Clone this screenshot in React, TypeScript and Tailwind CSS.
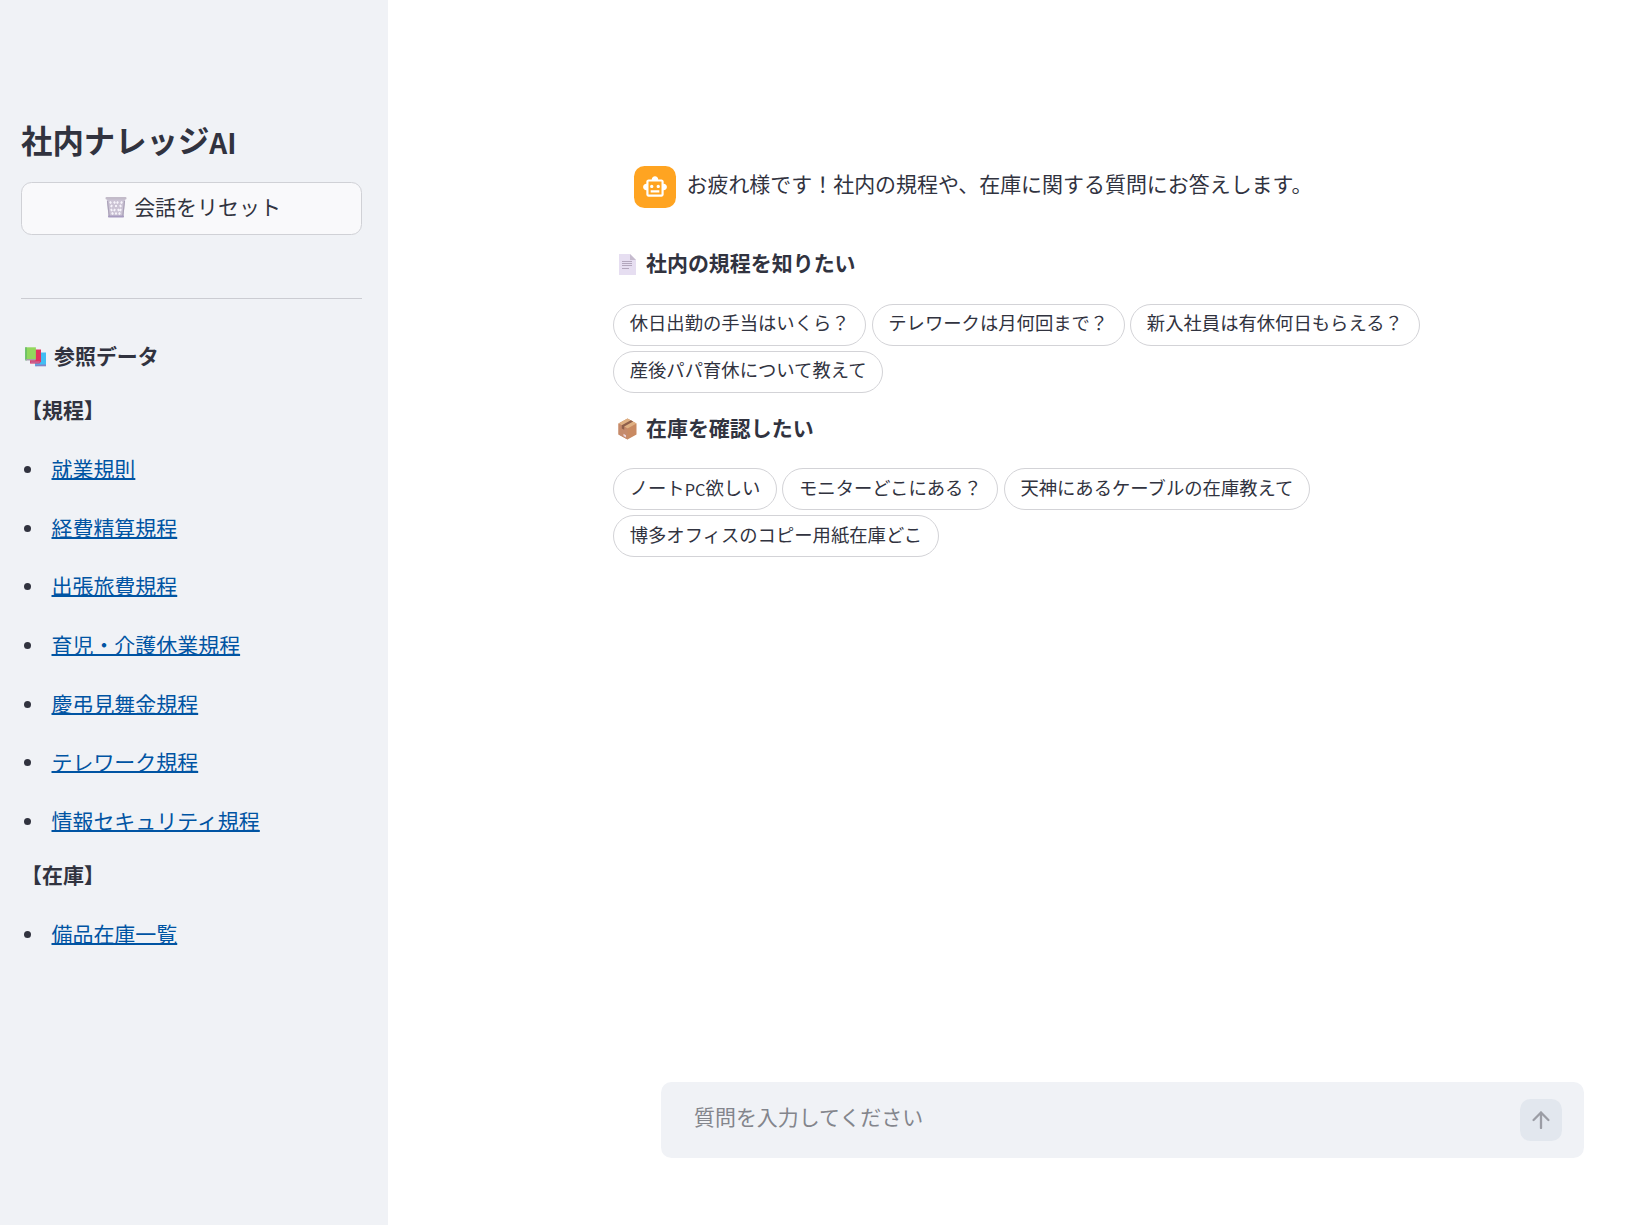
import type { ReactNode } from "react"

const rules = [
  "就業規則",
  "経費精算規程",
  "出張旅費規程",
  "育児・介護休業規程",
  "慶弔見舞金規程",
  "テレワーク規程",
  "情報セキュリティ規程",
]

const stocks = ["備品在庫一覧"]

const ruleQuestions = [
  "休日出勤の手当はいくら？",
  "テレワークは月何回まで？",
  "新入社員は有休何日もらえる？",
  "産後パパ育休について教えて",
]

const stockQuestions = [
  "ノートPC欲しい",
  "モニターどこにある？",
  "天神にあるケーブルの在庫教えて",
  "博多オフィスのコピー用紙在庫どこ",
]

function TrashIcon() {
  return (
    <svg viewBox="0 0 22 22" className="mb-[3px] h-[22px] w-[22px] shrink-0">
      <path d="M1.8 3h18.4l-1.8 18h-14.8z" fill="#cbc3d4" />
      <path
        d="M5 5.5l1 2M9 5.5l1 2M13 5.5l-1 2M17 5.5l-1 2M7 9l-1 2M11 9v2M15 9l1 2M6 13l1 2M10 13l-1 2M13 13l1 2M16 13l-1 2M7 16.5l1 2M11 16.5v2M15 16.5l-1 2"
        stroke="#f7f4fb"
        strokeWidth="1.9"
      />
      <path d="M2.5 5l1.7 15M19.5 5l-1.7 15" stroke="#aaa1b8" strokeWidth="1.2" />
      <rect x="0.5" y="1" width="21" height="2.6" rx="1" fill="#c3bbc9" />
      <rect x="3" y="19.6" width="16" height="1.9" rx="0.8" fill="#a79bc0" />
    </svg>
  )
}

function BooksIcon() {
  return (
    <svg viewBox="0 0 22 20" className="h-5 w-[22px] shrink-0">
      <path d="M10 5.5h11v12.5l-11 1.3z" fill="#42bdf3" />
      <path d="M10.5 17.5h10.5v1.8h-10.5z" fill="#7f86c8" />
      <path d="M5 2.5h11v12l-1.5 2h-9.5z" fill="#e2325f" />
      <path d="M5.5 14.3h9.5l-.6 2h-8.9z" fill="#c85f91" />
      <path d="M.3.3h10.6v12h-10.6z" fill="#92d75d" />
      <path d="M.3.3h1.3v13.2h-1.3z" fill="#59b567" />
      <path d="M1 12h10l-.6 1.6h-9.4z" fill="#a99dad" />
    </svg>
  )
}

function PageIcon() {
  return (
    <svg viewBox="0 0 17 21" className="ml-[1px] h-[21px] w-[17px] shrink-0">
      <path d="M0 0h11l6 6v15h-17z" fill="#e6def1" />
      <path d="M11 0l6 6h-6z" fill="#c6bbce" />
      <path d="M3 7.5h10M3 9.5h10M3 11.5h10M3 14.5h7" stroke="#b3a7bd" strokeWidth="1" />
    </svg>
  )
}

function BoxIcon() {
  return (
    <svg viewBox="0 0 19 22" className="h-[22px] w-[19px] shrink-0">
      <path d="M9.5.5l9 5v11l-9 5-9-5v-11z" fill="#c98a62" />
      <path d="M9.5.5l9 5-9 5-9-5z" fill="#dfb083" />
      <path d="M.5 5.5l9 5v11l-9-5z" fill="#c58a6b" />
      <path d="M3.8 7.3l9-5 2.4 1.3-9 5v3.2l-2.4-1.4z" fill="#8f5f4b" />
      <path d="M5.5 15.8l2.5 1.4v2.2l-2.5-1.4z" fill="#ecd5dd" />
    </svg>
  )
}

function RobotIcon() {
  return (
    <svg viewBox="0 0 24 24" className="h-[26px] w-[26px]" fill="#fff">
      <path d="M20 9V7c0-1.1-.9-2-2-2h-3c0-1.66-1.34-3-3-3S9 3.34 9 5H6c-1.1 0-2 .9-2 2v2c-1.66 0-3 1.34-3 3s1.34 3 3 3v4c0 1.1.9 2 2 2h12c1.1 0 2-.9 2-2v-4c1.66 0 3-1.34 3-3s-1.34-3-3-3zm-2 10H6V7h12v12zm-9-6c-.83 0-1.5-.67-1.5-1.5S8.17 10 9 10s1.5.67 1.5 1.5S9.83 13 9 13zm7.5-1.5c0 .83-.67 1.5-1.5 1.5s-1.5-.67-1.5-1.5.67-1.5 1.5-1.5 1.5.67 1.5 1.5zM8 15h8v2H8v-2z" />
    </svg>
  )
}

// Latin glyphs are set a little smaller than the kana and kanji around them
function MixedText({ text }: { text: string }) {
  return (
    <>
      {text.split(/([A-Za-z]+)/).map((part, i) =>
        /[A-Za-z]/.test(part) ? (
          <span key={i} className="align-[-0.5px] text-[0.89em] leading-none">
            {part}
          </span>
        ) : (
          part
        )
      )}
    </>
  )
}

function LinkList({ items }: { items: string[] }) {
  return (
    <ul>
      {items.map((item) => (
        <li key={item} className="flex h-[58.65px] items-center pl-[3px]">
          <span className="mr-[20.5px] h-[7px] w-[7px] rounded-full bg-[#31333f]" />
          <a href="#" className="pb-[2px] text-[#0054a3] underline decoration-2">
            {item}
          </a>
        </li>
      ))}
    </ul>
  )
}

function QuestionGroup({ icon, title, questions }: { icon: ReactNode; title: string; questions: string[] }) {
  return (
    <section>
      <h2 className="flex h-[34px] items-center font-bold">
        <span className="flex w-[33px] pl-[5px]">{icon}</span>
        <span className="pb-[2.6px]">{title}</span>
      </h2>
      <div className="mt-[22.66px] flex flex-wrap gap-[5.24px]">
        {questions.map((q) => (
          <button
            key={q}
            className="h-[41.9px] rounded-full border border-[#d3d3d7] bg-white px-[15.7px] pb-[4.6px] text-[18.34px] leading-[29px]"
          >
            <MixedText text={q} />
          </button>
        ))}
      </div>
    </section>
  )
}

export default function App() {
  return (
    <div className="flex h-[1225px] w-[1642px] bg-white font-['Noto_Sans_CJK_JP',sans-serif] text-[20.96px] leading-[33.5px] text-[#31333f]">
      <aside className="w-[388px] shrink-0 bg-[#f0f2f6] px-[21px] pt-[121px]">
        <h1 className="h-[38px] text-[31.4px] leading-[38px] font-bold">
          <MixedText text="社内ナレッジAI" />
        </h1>
        <button className="mt-[23px] flex h-[53px] w-[341px] items-center justify-center gap-[7px] rounded-[10.5px] border border-[#d0d1d6] bg-[#f9f9fb] pl-[3px]">
          <TrashIcon />
          <span className="pb-[4px]">会話をリセット</span>
        </button>
        <hr className="mt-[63px] w-[341px] border-[#cbccd2]" />
        <h2 className="mt-[41px] flex h-[34px] items-center font-bold">
          <span className="flex w-[33px] pl-1">
            <BooksIcon />
          </span>
          <span className="pb-[2px]">参照データ</span>
        </h2>
        <h3 className="mt-[18.9px] font-bold">【規程】</h3>
        <div className="mt-[14px]">
          <LinkList items={rules} />
        </div>
        <h3 className="mt-[7px] font-bold">【在庫】</h3>
        <div className="mt-[14px]">
          <LinkList items={stocks} />
        </div>
      </aside>

      <main className="flex flex-1 flex-col pt-[166px] pb-[67px]">
        <div className="ml-[246px] flex h-[42px] gap-[10.5px]">
          <div className="flex h-[42px] w-[42px] items-center justify-center rounded-[10.5px] bg-[#ffa421]">
            <RobotIcon />
          </div>
          <p className="pt-[1px]">お疲れ様です！社内の規程や、在庫に関する質問にお答えします。</p>
        </div>

        <div className="mt-[39.54px] ml-[225px] flex w-[830px] flex-col gap-[18.5px]">
          <QuestionGroup icon={<PageIcon />} title="社内の規程を知りたい" questions={ruleQuestions} />
          <QuestionGroup icon={<BoxIcon />} title="在庫を確認したい" questions={stockQuestions} />
        </div>

        <div className="mt-auto ml-[273px] flex h-[76px] w-[923px] items-center justify-between rounded-[10.5px] bg-[#f0f2f6] pr-[22px] pl-[33px]">
          <span className="pb-[6px] text-[#83858c]">質問を入力してください</span>
          <button className="flex h-[42px] w-[42px] items-center justify-center rounded-[10.5px] bg-[#e2e7ee]">
            <svg
              viewBox="0 0 18 18"
              className="h-[18px] w-[18px]"
              fill="none"
              stroke="#9b9da5"
              strokeWidth="2.3"
              strokeLinecap="round"
              strokeLinejoin="round"
            >
              <path d="M9 17V1.5M1.6 9L9 1.5L16.4 9" />
            </svg>
          </button>
        </div>
      </main>
    </div>
  )
}
